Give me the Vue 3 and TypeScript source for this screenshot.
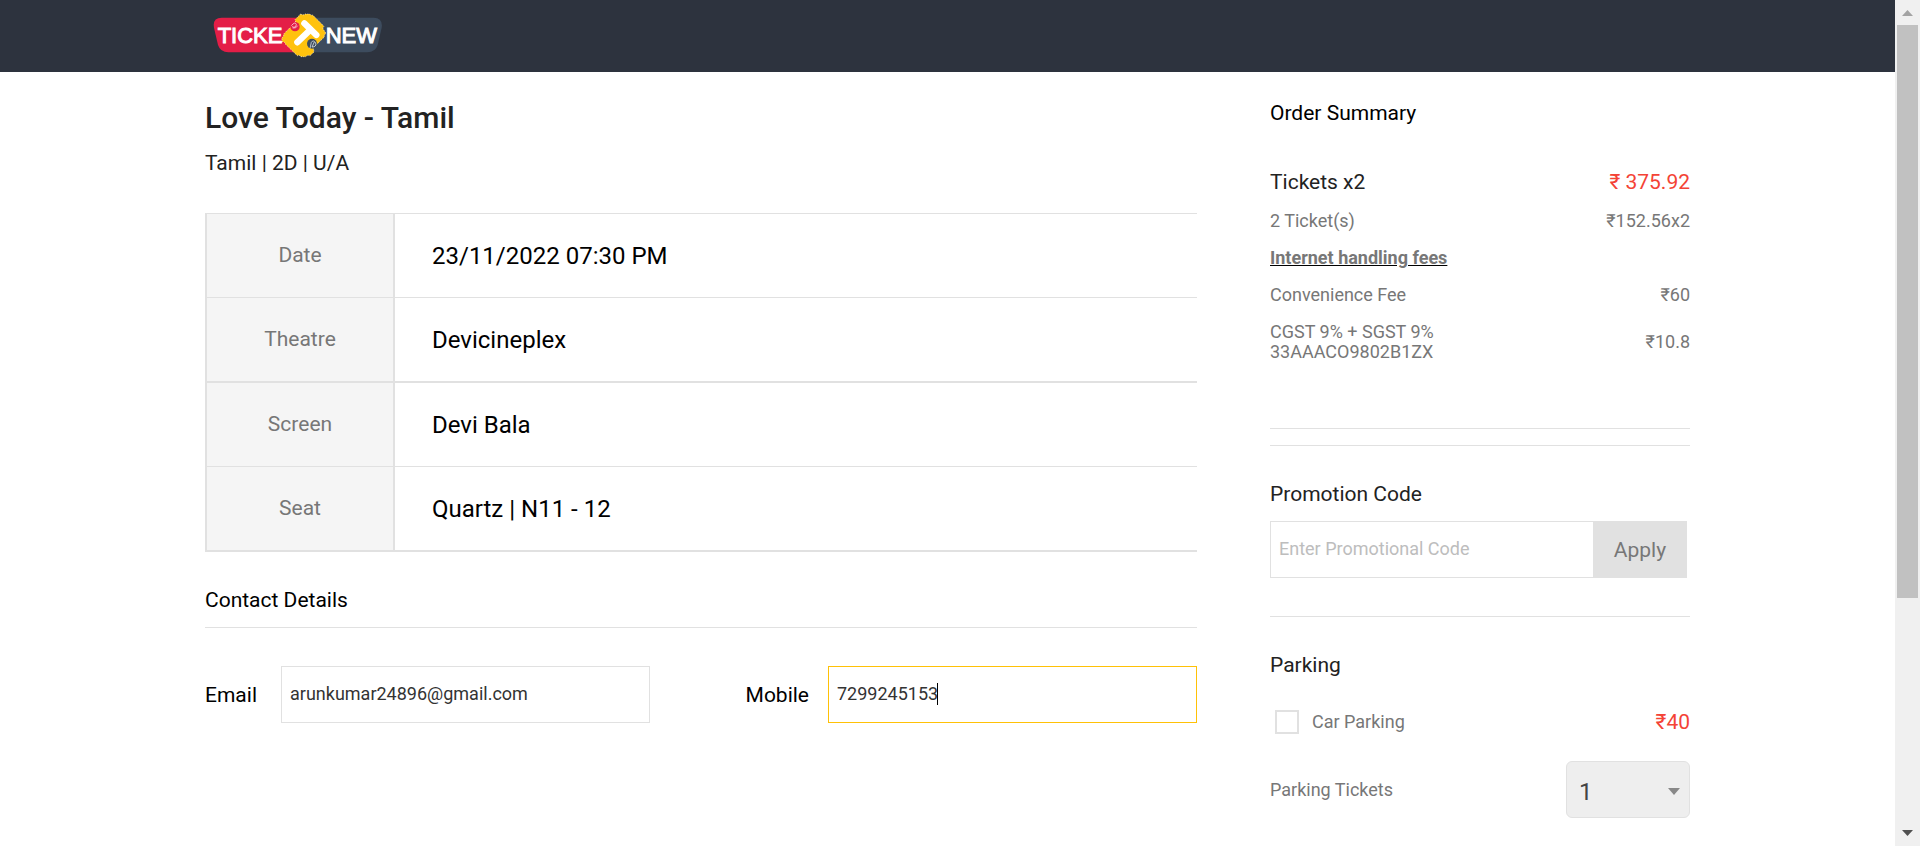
<script setup lang="ts">
import { onMounted, ref } from 'vue'

interface Detail {
  label: string
  value: string
}

interface Charge {
  label: string[]
  amount: string
  heading?: boolean
}

const details: Detail[] = [
  { label: 'Date', value: '23/11/2022 07:30 PM' },
  { label: 'Theatre', value: 'Devicineplex' },
  { label: 'Screen', value: 'Devi Bala' },
  { label: 'Seat', value: 'Quartz | N11 - 12' },
]

const charges: Charge[] = [
  { label: ['2 Ticket(s)'], amount: '₹152.56x2' },
  { label: ['Internet handling fees'], amount: '', heading: true },
  { label: ['Convenience Fee'], amount: '₹60' },
  { label: ['CGST 9% + SGST 9%', '33AAACO9802B1ZX'], amount: '₹10.8' },
]

const email = ref('arunkumar24896@gmail.com')
const mobile = ref('7299245153')
const promo = ref('')
const carParking = ref(false)
const parkingTickets = ref('1')
const mobileInput = ref<HTMLInputElement | null>(null)

onMounted(() => mobileInput.value?.focus())
</script>

<template>
  <div class="window">
    <div class="page">
      <header class="topbar">
        <a class="logo" href="#" aria-label="TicketNew">
          <svg viewBox="40 40 510 135" width="170" height="45" aria-hidden="true">
            <path d="M66 54H300V158H86Q62 158 55 136L43 84Q38 54 66 54Z" fill="#e41e47" />
            <path d="M300 54H522Q550 54 546 84L534 136Q527 158 503 158H300Z" fill="#3d4c5e" />
            <path
              d="M303 43Q311 48 317 43H331Q334 48 339 46L373 80Q367 86 373 92L379 101Q372 106 374 112L341 144L343 157L331 168Q324 165 318 171H303Q300 165 293 168L256 132Q257 127 248 126L246 115Q254 110 252 103L288 67L286 60Z"
              fill="#ffc20e"
              stroke="#fff"
              stroke-width="2"
              stroke-dasharray="3 4"
            />
            <g stroke="#fff" stroke-width="19" stroke-linecap="round">
              <path d="M314 71L350 106" />
              <path d="M332 90L293 128" />
            </g>
            <circle cx="286" cy="81" r="14" fill="#e41e47" />
            <circle cx="337" cy="132" r="15" fill="#3d4c5e" />
            <g fill="none" stroke="#fff" stroke-width="2">
              <path d="M275 78Q287 64 290 75Q288 86 277 81M279 85Q290 87 294 78" />
              <path d="M331 146L335 128Q341 119 348 130Q351 142 337 142L344 127" />
            </g>
            <g class="logo-text">
              <text x="54" y="131">TICKE</text>
              <text x="378" y="131">NEW</text>
            </g>
          </svg>
        </a>
      </header>

      <main class="content">
        <section class="booking">
          <h1>Love Today - Tamil</h1>
          <p class="meta">Tamil | 2D | U/A</p>

          <table class="details">
            <tbody>
              <tr v-for="row in details" :key="row.label">
                <th scope="row">{{ row.label }}</th>
                <td>{{ row.value }}</td>
              </tr>
            </tbody>
          </table>

          <h2 class="contact-title">Contact Details</h2>
          <form class="contact" @submit.prevent>
            <div class="field">
              <label for="email">Email</label>
              <input id="email" v-model="email" class="box" type="text" />
            </div>
            <div class="field">
              <label for="mobile">Mobile</label>
              <div class="caret-box">
                <input id="mobile" ref="mobileInput" v-model="mobile" class="box" type="tel" />
                <span class="caret" :style="{ left: `calc(8px + ${mobile.length}ch)` }"></span>
              </div>
            </div>
          </form>
        </section>

        <aside class="summary">
          <h2>Order Summary</h2>
          <div class="charges">
            <div class="line total">
              <span>Tickets x2</span>
              <span class="price">₹ 375.92</span>
            </div>
            <div v-for="charge in charges" :key="charge.label[0]" class="line">
              <span v-if="charge.heading" class="fees"><b>{{ charge.label[0] }}</b></span>
              <span v-else>
                <span v-for="text in charge.label" :key="text" class="text-row">{{ text }}</span>
              </span>
              <span>{{ charge.amount }}</span>
            </div>
          </div>

          <form class="promo" @submit.prevent>
            <label for="promo">Promotion Code</label>
            <div class="promo-row">
              <input id="promo" v-model="promo" class="box" type="text" placeholder="Enter Promotional Code" />
              <button type="submit">Apply</button>
            </div>
          </form>

          <section class="parking">
            <h2>Parking</h2>
            <div class="line car">
              <label class="check">
                <input v-model="carParking" type="checkbox" />
                <span>Car Parking</span>
              </label>
              <span class="price">₹40</span>
            </div>
            <div class="line">
              <label for="parking-tickets">Parking Tickets</label>
              <div class="select">
                <select id="parking-tickets" v-model="parkingTickets">
                  <option>1</option>
                  <option>2</option>
                </select>
                <svg viewBox="0 0 12 7" width="12" height="7" aria-hidden="true">
                  <path d="M0 0H12L6 7Z" fill="#888" />
                </svg>
              </div>
            </div>
          </section>
        </aside>
      </main>
    </div>

    <div class="scrollbar" aria-hidden="true">
      <svg viewBox="0 0 25 25" width="25" height="25"><path d="M7 16L12.500 10L18 16Z" fill="#a3a3a3" /></svg>
      <div class="track"><div class="thumb"></div></div>
      <svg viewBox="0 0 25 25" width="25" height="25"><path d="M7 9L12.500 15L18 9Z" fill="#505050" /></svg>
    </div>
  </div>
</template>

<style>
body {
  margin: 0;
  background: #fff;
}
</style>

<style scoped>
.window {
  display: flex;
  min-height: 100vh;
  font-family: Roboto, "Noto Sans", sans-serif;
  font-size: 21px;
  line-height: 24px;
  color: #000;
}

.window *,
.window *::before {
  box-sizing: border-box;
}

.page {
  flex: 1;
  min-width: 0;
}

.topbar {
  height: 72px;
  padding: 13px 11%;
  background: #2d333e;
}

.logo {
  display: block;
  width: 170px;
  margin-left: 5px;
}

.logo svg {
  display: block;
}

.logo-text {
  font-family: "Liberation Sans", Arial, sans-serif;
  font-size: 66px;
  fill: #fff;
  stroke: #fff;
  stroke-width: 3px;
}

.content {
  display: grid;
  grid-template-columns: minmax(0, 992fr) minmax(0, 420fr);
  column-gap: 73px;
  padding: 28px 205px;
}

h1,
h2,
p {
  margin: 0;
}

h1 {
  font-size: 30px;
  line-height: 36px;
  font-weight: 500;
  color: #222;
}

h2 {
  font-size: 21px;
  line-height: 24px;
  font-weight: 400;
}

.meta {
  margin-top: 15px;
  color: #222;
}

.details {
  width: 100%;
  margin-top: 38px;
  border-collapse: separate;
  border-spacing: 0;
  border-left: 2px solid #e1e1e1;
  border-bottom: 2px solid #e1e1e1;
}

.details th,
.details td {
  padding: 29px 0 30px;
  border-top: 1px solid #e1e1e1;
  font-weight: 400;
}

.details tr:nth-child(3) > * {
  border-top-width: 2px;
}

.details th {
  width: 188px;
  background: #f5f5f5;
  border-right: 2px solid #e1e1e1;
  color: #777;
  text-align: center;
}

.details td {
  padding: 30px 0 29px 37px;
  font-size: 24px;
}

.contact-title {
  margin-top: 36px;
  padding-bottom: 15px;
  border-bottom: 1px solid #e1e1e1;
}

.contact {
  display: flex;
  flex-wrap: wrap;
  justify-content: space-between;
  gap: 24px;
  margin-top: 38px;
}

.field {
  display: flex;
  align-items: center;
  justify-content: space-between;
}

.field:first-child {
  gap: 24px;
}

.field:last-child {
  gap: 19px;
}

.box {
  display: block;
  height: 57px;
  margin: 0;
  padding: 0 8px 2px;
  border: 1px solid #e1e1e1;
  border-radius: 0;
  background: #fff;
  outline: none;
  font-family: inherit;
  font-size: 18px;
  color: #333;
}

.box::placeholder {
  color: #bdbdbd;
  opacity: 1;
}

.box:focus {
  border-color: #ffc107;
}

.field .box {
  width: 369px;
}

.caret-box {
  position: relative;
  font-size: 18px;
}

.caret-box .box {
  caret-color: transparent;
}

.caret {
  position: absolute;
  top: 17px;
  width: 1px;
  height: 22px;
  background: #000;
  visibility: hidden;
}

.box:focus + .caret {
  visibility: visible;
}

.summary h2,
.promo label {
  color: #222;
}

.summary > h2 {
  margin-top: 1px;
  color: #000;
}

.charges {
  display: flex;
  flex-direction: column;
  gap: 17px;
  margin-top: 45px;
  padding-bottom: 66px;
  border-bottom: 1px solid #e1e1e1;
}

.line {
  display: flex;
  align-items: center;
  justify-content: space-between;
  font-size: 18px;
  line-height: 20px;
  color: #777;
}

.total {
  font-size: 21px;
  line-height: 24px;
  color: #222;
}

.price {
  font-size: 21px;
  color: #f44336;
}

.fees {
  color: #000;
  text-decoration: underline;
}

.fees b {
  font-weight: 700;
  color: #777;
}

.text-row {
  display: block;
}

.promo {
  margin-top: 16px;
  padding: 36px 0 38px;
  border-top: 1px solid #e1e1e1;
  border-bottom: 1px solid #e1e1e1;
}

.promo label {
  display: block;
}

.promo-row {
  display: flex;
  margin: 15px 3px 0 0;
}

.promo-row .box {
  flex: 1;
  min-width: 0;
  border-right: 0;
}

.promo-row button {
  width: 94px;
  padding: 0;
  border: 0;
  background: #e1e1e1;
  font-family: inherit;
  font-size: 21px;
  color: #777;
}

.parking {
  padding-top: 36px;
}

.car {
  margin: 33px 0 27px;
  line-height: 24px;
}

.check {
  display: flex;
  align-items: center;
  gap: 13px;
  margin-left: 5px;
}

.check input {
  appearance: none;
  width: 24px;
  height: 24px;
  margin: 0;
  border: 2px solid #e1e1e1;
  background: #fff;
}

.check input:checked {
  background: #ffc107;
}

.select {
  position: relative;
  width: 124px;
}

.select select {
  appearance: none;
  display: block;
  width: 100%;
  height: 57px;
  padding: 4px 12px 0;
  border: 1px solid #e1e1e1;
  border-radius: 6px;
  background: #eee;
  font-family: inherit;
  font-size: 24px;
  color: #444;
}

.select svg {
  position: absolute;
  top: 27px;
  right: 10px;
  pointer-events: none;
}

.scrollbar {
  position: sticky;
  top: 0;
  display: flex;
  flex-direction: column;
  width: 25px;
  height: 100vh;
  background: #f0f0f0;
}

.scrollbar svg {
  display: block;
}

.track {
  flex: 1;
  padding: 0 2px;
}

.thumb {
  height: 72%;
  background: #c1c1c1;
}
</style>
